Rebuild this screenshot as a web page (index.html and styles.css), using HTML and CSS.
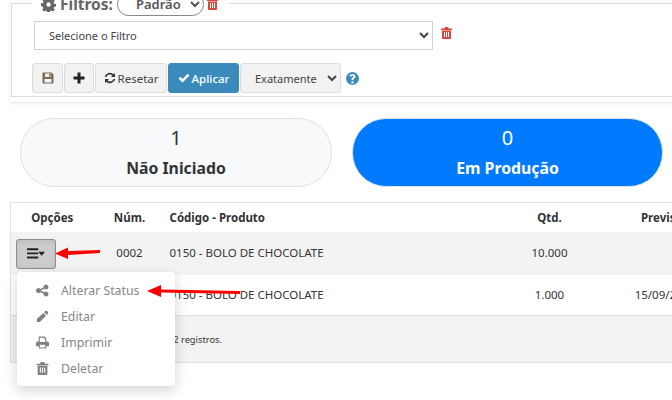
FILE: index.html
```html
<!DOCTYPE html>
<html lang="pt-BR">
<head>
  <meta charset="UTF-8" />
  <title>Ordens de Produção</title>
  <link rel="stylesheet" href="styles.css">
</head>
<body>
  <div class="page">
    <div class="filter-card">
      <fieldset class="filter-box">
        <legend class="filter-legend">
          <svg class="icon-cog" viewBox="0 0 24 24"><path fill-rule="evenodd" d="M10 1h4l.6 3.2 1.900.8 2.700-1.800 2.800 2.800-1.800 2.700.8 1.900 3.200.6v4l-3.200.6-.8 1.900 1.800 2.700-2.800 2.800-2.700-1.800-1.900.8-.6 3.200h-4l-.6-3.200-1.900-.8-2.700 1.800-2.800-2.800 1.800-2.700-.8-1.900L0 14v-4l3.200-.6.8-1.900L2.200 4.800 5 2l2.700 1.800 1.900-.8zM12 8.500a3.500 3.500 0 1 0 0 7 3.500 3.500 0 0 0 0-7z"/></svg>
          <span class="legend-text">Filtros:</span>
          <select class="pill-select"><option>Padrão</option></select>
          <svg class="icon-trash legend-trash" viewBox="0 0 22 24"><path fill-rule="evenodd" d="M8 0h6l1.500 3H21a1 1 0 0 1 1 1v2H0V4a1 1 0 0 1 1-1h5.500zM2 7h18v15a2 2 0 0 1-2 2H4a2 2 0 0 1-2-2zm4 3v10h2V10zm4 0v10h2V10zm4 0v10h2V10z"/></svg>
        </legend>

        <div class="filter-row">
          <select class="filter-select"><option>Selecione o Filtro</option></select>
          <svg class="icon-trash row-trash" viewBox="0 0 22 24"><path fill-rule="evenodd" d="M8 0h6l1.500 3H21a1 1 0 0 1 1 1v2H0V4a1 1 0 0 1 1-1h5.500zM2 7h18v15a2 2 0 0 1-2 2H4a2 2 0 0 1-2-2zm4 3v10h2V10zm4 0v10h2V10zm4 0v10h2V10z"/></svg>
        </div>

        <div class="action-buttons">
          <button class="btn btn-save"><svg class="btn-icon" viewBox="0 0 24 24"><path fill-rule="evenodd" fill="#7a6a50" d="M2 1h17l4 4v16a2 2 0 0 1-2 2H3a2 2 0 0 1-2-2V2a1 1 0 0 1 1-1zm4 2v7h11V3zm8 1h2v5h-2zM5 14v7h14v-7z"/></svg></button>
          <button class="btn btn-plus"><svg class="btn-icon" viewBox="0 0 24 24"><path fill="#222" d="M9 1h6v8h8v6h-8v8H9v-8H1V9h8z"/></svg></button>
          <button class="btn btn-reset"><svg class="btn-icon" viewBox="0 0 24 24"><path fill="#333" d="M22 2v8h-8l3-3a7.500 7.500 0 0 0-12.300 2.800H1.400A10.800 10.800 0 0 1 19.400 4.600zM2 22v-8h8l-3 3a7.500 7.500 0 0 0 12.300-2.800h3.300A10.800 10.800 0 0 1 4.600 19.400z"/></svg>Resetar</button>
          <button class="btn btn-apply"><svg class="btn-icon" viewBox="0 0 24 24"><path fill="#fff" d="M9 21 1 13l3.500-3.500L9 14 19.500 3.500 23 7z"/></svg>Aplicar</button>
          <select class="match-select"><option>Exatamente</option></select>
          <svg class="help-icon" viewBox="0 0 24 24"><path fill-rule="evenodd" fill="#3a8bbb" d="M12 0a12 12 0 1 1 0 24 12 12 0 0 1 0-24zm-2 17.500V21h4v-3.500zM12 3.500c-3 0-5 1.500-5.500 4.500l3.400.6c.3-1.300.9-2 2-2s1.800.6 1.800 1.500c0 .8-.5 1.300-1.500 2-1.400 1-1.900 2-1.900 3.400v1.500h3.500v-1c0-.7.3-1.100 1.300-1.800 1.500-1 2.400-2.200 2.400-4 0-3-2.400-4.700-5.500-4.700z"/></svg>
        </div>
      </fieldset>
    </div>

    <div class="status-row">
      <div class="status-pill">
        <div class="status-count">1</div>
        <div class="status-label">Não Iniciado</div>
      </div>
      <div class="status-pill status-active">
        <div class="status-count">0</div>
        <div class="status-label">Em Produção</div>
      </div>
    </div>

    <div class="table-wrap">
      <table class="orders">
        <colgroup>
          <col class="col-opt"><col class="col-num"><col class="col-prod"><col class="col-qty"><col class="col-date">
        </colgroup>
        <thead>
          <tr>
            <th>Opções</th>
            <th>Núm.</th>
            <th class="left">Código - Produto</th>
            <th>Qtd.</th>
            <th>Previsão</th>
          </tr>
        </thead>
        <tbody>
          <tr class="row-first">
            <td>
              <button class="menu-btn">
                <svg class="bars" viewBox="0 0 24 14"><path fill="#222" d="M0 0h15v2.500H0zM0 5.500h15V8H0zM0 11h15v2.500H0zM15 4.500h9L19.500 10z"/></svg>
              </button>
            </td>
            <td>0002</td>
            <td class="left">0150 - BOLO DE CHOCOLATE</td>
            <td>10.000</td>
            <td></td>
          </tr>
          <tr class="row-second">
            <td></td>
            <td></td>
            <td class="left">0150 - BOLO DE CHOCOLATE</td>
            <td>1.000</td>
            <td>15/09/2021</td>
          </tr>
        </tbody>
        <tfoot>
          <tr>
            <td colspan="5" class="table-foot">Mostrando 2 registros.</td>
          </tr>
        </tfoot>
      </table>

      <ul class="dropdown">
        <li><svg class="menu-icon" viewBox="0 0 24 24"><path d="M18.500 1a4.500 4.500 0 1 1-3.300 7.600l-6 3a4.600 4.600 0 0 1 0 .8l6 3a4.500 4.500 0 1 1-1.200 2.600l-6-3a4.500 4.500 0 1 1 0-6l6-3A4.500 4.500 0 0 1 18.500 1z"/></svg>Alterar Status</li>
        <li><svg class="menu-icon" viewBox="0 0 24 24"><path d="M17 2a2.500 2.500 0 0 1 3.500 0L22 3.500A2.500 2.500 0 0 1 22 7l-2 2-5-5zM13.500 5.500l5 5L7 22H1.500v-5.500z"/></svg>Editar</li>
        <li><svg class="menu-icon" viewBox="0 0 24 24"><path fill-rule="evenodd" d="M5 1h11l3 3v6h2a3 3 0 0 1 3 3v6h-5v4H5v-4H0v-6a3 3 0 0 1 3-3h2zm2 2v8h10V5h-2.500V3zm0 13v5h10v-5z"/></svg>Imprimir</li>
        <li><svg class="menu-icon" viewBox="0 0 22 24"><path fill-rule="evenodd" d="M8 0h6l1.500 3H21a1 1 0 0 1 1 1v2H0V4a1 1 0 0 1 1-1h5.500zM2 7h18v15a2 2 0 0 1-2 2H4a2 2 0 0 1-2-2zm4 3v10h2V10zm4 0v10h2V10zm4 0v10h2V10z"/></svg>Deletar</li>
      </ul>
    </div>

    <svg class="arrows" viewBox="0 0 672 400">
      <path fill="#f00" d="M55 253.500 68 247.500 68 251 100 250 100 253 68 255 68 259z"/>
      <path fill="#f00" d="M147 291 161 285 161 289.500 240 291 240 294 161 292.500 161 297z"/>
    </svg>
  </div>
</body>
</html>
```

FILE: styles.css
```css
body {
  font-family: "Noto Sans", "Open Sans", sans-serif;
  color: #333;
  background: #fff;
  margin: 0;
  overflow: hidden;
}

.page {
  position: relative;
  width: 672px;
  height: 400px;
  overflow: hidden;
}

.filter-card {
  display: flow-root;
  margin-left: 10px;
  height: 102px;
  box-shadow: 0 1px 3px rgba(0,0,0,0.12);
}

.filter-box {
  box-sizing: border-box;
  height: 105px;
  width: 700px;
  margin: -8px 0 0 1px;
  padding: 0 0 0 22px;
  border: 1px solid #dcdcdc;
}

.filter-legend {
  box-sizing: border-box;
  display: flex;
  align-items: center;
  height: 22px;
  margin-left: -2px;
  padding: 2px 11px 0 9px;
  white-space: nowrap;
}

.icon-cog {
  width: 15px;
  height: 15px;
  fill: #666;
  margin-right: 4px;
}

.legend-text {
  font-size: 15.500px;
  font-weight: 700;
  color: #666;
}

.pill-select {
  font-family: inherit;
  font-size: 13px;
  font-weight: 600;
  color: #555;
  width: 87px;
  height: 23px;
  margin-left: 4px;
  padding: 0 0 0 14px;
  background: #fff;
  border: 1px solid #888;
  border-radius: 14px;
}

.icon-trash {
  fill: #d9463a;
}

.legend-trash {
  width: 11px;
  height: 12px;
  margin-left: 3px;
}

.filter-row {
  display: flex;
  align-items: flex-start;
  margin-top: 7px;
}

.filter-select {
  font-family: inherit;
  font-size: 11px;
  color: #444;
  width: 399px;
  height: 29px;
  padding: 0 10px;
  background: #fff;
  border: 1px solid #ced4da;
}

.row-trash {
  width: 11px;
  height: 12px;
  margin: 6px 0 0 8px;
}

.action-buttons {
  display: flex;
  align-items: center;
  gap: 1px;
  margin-top: 13px;
  margin-left: -2px;
}

.btn {
  display: flex;
  align-items: center;
  justify-content: center;
  font-family: inherit;
  font-size: 11.500px;
  height: 30px;
  padding: 0;
  color: #444;
  background: #f2f2f2;
  border: 1px solid #ddd;
  border-radius: 3px;
}

.btn-save { width: 31px; }
.btn-plus { width: 30px; }
.btn-reset { width: 72px; }

.btn-apply {
  width: 71px;
  color: #fff;
  font-weight: 500;
  background: #3a8bbb;
  border-color: #3a8bbb;
}

.btn-icon {
  width: 12px;
  height: 12px;
  margin-right: 2px;
}

.btn-save .btn-icon, .btn-plus .btn-icon {
  margin-right: 0;
}

.match-select {
  font-family: inherit;
  font-size: 11px;
  color: #444;
  width: 101px;
  height: 30px;
  padding: 0 0 0 10px;
  background: #f2f2f2;
  border: 1px solid #ddd;
  border-radius: 3px;
}

.help-icon {
  width: 13px;
  height: 13px;
  margin-left: 4px;
}

.status-row {
  display: flex;
  gap: 20px;
  padding: 16px 0 0 20px;
}

.status-pill {
  box-sizing: border-box;
  width: 312px;
  height: 69px;
  padding-top: 6px;
  text-align: center;
  background: #f8f9fa;
  border: 1px solid #dee2e6;
  border-radius: 34px;
}

.status-active {
  width: 311px;
  color: #fff;
  background: #007bff;
}

.status-count {
  font-size: 20px;
  line-height: 26px;
}

.status-label {
  font-size: 15.800px;
  font-weight: 700;
  line-height: 22px;
  margin-top: 6px;
}

.table-wrap {
  position: relative;
  margin: 15px 0 0 10px;
}

.orders {
  table-layout: fixed;
  width: 731px;
  border-collapse: collapse;
  border: 1px solid #dee2e6;
  font-size: 11.500px;
}

.col-opt { width: 83px; }
.col-num { width: 72px; }
.col-prod { width: 344px; }
.col-qty { width: 80px; }
.col-date { width: 152px; }

.orders th {
  height: 28px;
  padding: 0 0 1px;
  font-weight: 700;
  text-align: center;
}

.orders td {
  padding: 0 0 2px;
  text-align: center;
}

.orders .left {
  padding-left: 4px;
  text-align: left;
}

.row-first td {
  height: 41px;
  background: #f3f3f3;
}

.row-first td:first-child {
  padding: 0;
  height: 43px;
}

.row-second td {
  height: 38px;
}

.orders .table-foot {
  height: 46px;
  padding: 0 0 0 112px;
  font-size: 9.300px;
  text-align: left;
  background: #f3f3f3;
  border-top: 1px solid #dee2e6;
  border-bottom: 1px solid #dee2e6;
}

.menu-btn {
  display: flex;
  align-items: center;
  justify-content: center;
  width: 40px;
  height: 30px;
  margin-left: 5px;
  padding: 0;
  background: #ccc;
  border: 1px solid #8c8c8c;
  border-radius: 3px;
  box-shadow: inset 0 2px 4px rgba(0,0,0,0.08);
}

.bars {
  width: 18px;
  height: 11px;
}

.dropdown {
  position: absolute;
  left: 7px;
  top: 70px;
  box-sizing: border-box;
  width: 158px;
  height: 114px;
  margin: 0;
  padding: 5px 0;
  list-style: none;
  background: #fff;
  border-radius: 4px;
  box-shadow: 0 4px 14px rgba(0,0,0,0.18);
}

.dropdown li {
  display: flex;
  align-items: center;
  height: 26px;
  padding-left: 19px;
  font-size: 12.300px;
  color: #868686;
}

.menu-icon {
  width: 13px;
  height: 13px;
  margin-right: 12px;
  fill: #808080;
}

.arrows {
  position: absolute;
  left: 0;
  top: 0;
  width: 672px;
  height: 400px;
}
```
